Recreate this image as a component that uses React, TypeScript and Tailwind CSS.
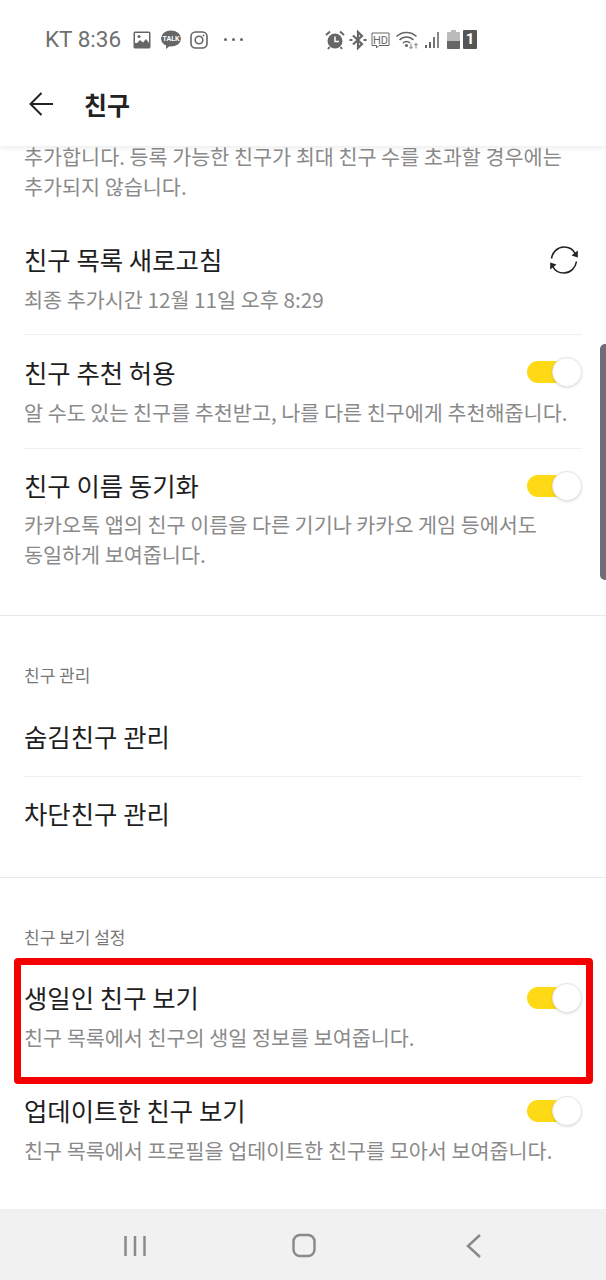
const font = { fontFamily: '"Noto Sans CJK KR", "Noto Sans", sans-serif' }

function Toggle() {
  return (
    <div className="relative h-[32px] w-[55px] shrink-0">
      <div className="absolute left-0 top-[5px] h-[22px] w-[40px] rounded-full bg-[#fdd916]" />
      <div className="absolute right-0 top-[1px] h-[30px] w-[30px] rounded-full border border-[#e6e6e6] bg-white shadow-sm" />
    </div>
  )
}

function Refresh() {
  return (
    <svg width="32" height="32" viewBox="0 0 32 32" fill="none" className="shrink-0">
      <path d="M3.5 14.5C4.5 8 9.5 3 16 3c5.2 0 9.5 2.8 11.5 7" stroke="#222" strokeWidth="1.6" />
      <path d="M28.5 17.5C27.5 24 22.500 29 16 29c-5.200 0-9.500-2.800-11.500-7" stroke="#222" strokeWidth="1.6" />
      <path d="M29.800 6.500 29.800 13.500 23.500 11.500Z" fill="#222" />
      <path d="M2.200 25.500 2.200 18.500 8.500 20.500Z" fill="#222" />
    </svg>
  )
}

function StatusBar() {
  return (
    <div className="flex h-[78px] items-center pl-[45px] pt-[1px] text-[#6f6f6f]">
      <span className="w-[90px] text-[22.5px] leading-none" style={{ fontFamily: 'Roboto, sans-serif' }}>KT 8:36</span>
      <svg width="18" height="18" viewBox="0 0 18 18" className="ml-[-2px]">
        <rect x="0.500" y="0.500" width="17" height="17" rx="1.500" fill="#666" />
        <rect x="2" y="2" width="14" height="10" fill="#fff" />
        <circle cx="6" cy="5.500" r="1.500" fill="#666" />
        <path d="M2 14 7 9l3 2.500L13 8l3 4v2Z" fill="#666" />
      </svg>
      <svg width="22" height="20" viewBox="0 0 22 20" className="ml-[9px]">
        <ellipse cx="11" cy="8.500" rx="10" ry="8" fill="#666" />
        <path d="M6 14v5l5-4Z" fill="#666" />
        <text x="11" y="11" textAnchor="middle" fontSize="7" fontWeight="700" fill="#fff" fontFamily="Roboto, sans-serif">TALK</text>
      </svg>
      <svg width="18" height="18" viewBox="0 0 18 18" fill="none" stroke="#666" strokeWidth="1.600" className="ml-[8px]">
        <rect x="1" y="1" width="16" height="16" rx="4.500" />
        <circle cx="9" cy="9" r="3.800" />
        <circle cx="13.500" cy="4.500" r="0.600" fill="#666" strokeWidth="0.800" />
      </svg>
      <div className="ml-[16px] flex gap-[5px]">
        <span className="h-[3px] w-[3px] rounded-full bg-[#666]" />
        <span className="h-[3px] w-[3px] rounded-full bg-[#666]" />
        <span className="h-[3px] w-[3px] rounded-full bg-[#666]" />
      </div>
      <svg width="20" height="20" viewBox="0 0 20 20" className="ml-[82px]">
        <circle cx="10" cy="11" r="7.500" fill="#666" />
        <path d="M10 6.500V11.500H14" stroke="#fff" strokeWidth="1.500" fill="none" />
        <path d="M1 5 5 1.500M19 5 15 1.500M4.500 17 3 19M15.500 17 17 19" stroke="#666" strokeWidth="2" />
      </svg>
      <svg width="18" height="20" viewBox="0 0 18 20" fill="none" stroke="#666" strokeWidth="2.200" className="ml-[4px]">
        <path d="M4 5.500 13 14 9 18V2l4 4-9 8.500" />
        <path d="M0.500 10H3.500M14.500 10h3" />
      </svg>
      <svg width="19" height="17" viewBox="0 0 19 17" fill="none" className="ml-[4px] mt-[1px]">
        <path d="M1 1h17v12.500H8L5.500 16v-2.500H1Z" stroke="#666" strokeWidth="1" />
        <text x="9.500" y="11.500" textAnchor="middle" fontSize="11" fill="#666" fontFamily="Roboto, sans-serif">HD</text>
      </svg>
      <svg width="24" height="20" viewBox="0 0 24 20" fill="none" stroke="#666" strokeWidth="1.500" className="ml-[6px]">
        <path d="M0.500 6.500C6 1 15 1 20.500 6.500" />
        <path d="M3.500 10c4-4 10-4 14 0" />
        <path d="M7 13c2-2 5-2 7 0" />
        <circle cx="10.500" cy="15.500" r="0.800" fill="#666" />
        <path d="M15 13.500v5M13.500 17l1.500 1.500 1.500-1.500M20 18.500v-5M18.500 15l1.500-1.500 1.500 1.500" stroke="#999" strokeWidth="1.200" />
      </svg>
      <svg width="16" height="18" viewBox="0 0 16 18" fill="#666" className="ml-[5px]">
        <rect x="0" y="14" width="2" height="3" />
        <rect x="4" y="11" width="2" height="6" />
        <rect x="8" y="6" width="2" height="11" fill="#777" />
        <rect x="12" y="1" width="2" height="16" fill="#888" />
      </svg>
      <svg width="13" height="19" viewBox="0 0 13 19" className="ml-[6px]">
        <path d="M4 0h5v2h3a1 1 0 0 1 1 1v15a1 1 0 0 1-1 1H1a1 1 0 0 1-1-1V3a1 1 0 0 1 1-1h3Z" fill="#bbb" />
        <path d="M0 11h13v7a1 1 0 0 1-1 1H1a1 1 0 0 1-1-1Z" fill="#666" />
      </svg>
      <div className="ml-[3px] flex h-[19px] w-[14px] items-center justify-center rounded-[1px] bg-[#555] text-[15px] font-bold leading-none text-white" style={{ fontFamily: 'Roboto, sans-serif' }}>1</div>
    </div>
  )
}

function Title({ children }: { children: string }) {
  return <div className="whitespace-nowrap text-[25.4px] leading-[36px] text-[#1e1e1e]">{children}</div>
}

function Desc({ children }: { children: string }) {
  return <div className="whitespace-nowrap text-[20.7px] leading-[30px] text-[#8a8a8a]">{children}</div>
}

function Label({ children }: { children: string }) {
  return <div className="text-[17px] leading-[24px] text-[#777]">{children}</div>
}

export default function App() {
  return (
    <div className="flex h-[1280px] w-[606px] flex-col overflow-hidden bg-white" style={font}>
      <div className="relative z-10 h-[146px] shrink-0 bg-white shadow-[0_2px_6px_rgba(0,0,0,0.08)]">
        <StatusBar />
        <div className="flex h-[52px] items-center pl-[29px]">
          <svg width="24" height="24" viewBox="0 0 24 24" fill="none" stroke="#222" strokeWidth="2">
            <path d="M24 12H2M12.500 1 1.500 12l11 11" />
          </svg>
          <span className="ml-[31px] text-[25px] font-semibold leading-none text-[#222]">친구</span>
        </div>
      </div>

      <div className="relative flex-1 overflow-hidden">
        {/* scrolled list */}
        <div className="mt-[-5px] px-[24px]">
          <Desc>추가합니다. 등록 가능한 친구가 최대 친구 수를 초과할 경우에는</Desc>
          <Desc>추가되지 않습니다.</Desc>

          <div className="mt-[40px] flex items-start justify-between border-b border-[#f0f0f0] pb-[20px]">
            <div className="min-w-0 flex-1">
              <Title>친구 목록 새로고침</Title>
              <div className="mt-[7px]"><Desc>최종 추가시간 12월 11일 오후 8:29</Desc></div>
            </div>
            <div className="mr-[2px] mt-[3px]"><Refresh /></div>
          </div>

          <div className="flex items-start justify-between border-b border-[#f0f0f0] pb-[21px] pt-[19px]">
            <div className="min-w-0 flex-1">
              <Title>친구 추천 허용</Title>
              <div className="mt-[7px]"><Desc>알 수도 있는 친구를 추천받고, 나를 다른 친구에게 추천해줍니다.</Desc></div>
            </div>
            <div className="mt-[2px]"><Toggle /></div>
          </div>

          <div className="flex items-start justify-between pt-[18px]">
            <div className="min-w-0 flex-1">
              <Title>친구 이름 동기화</Title>
              <div className="mt-[6px]">
                <Desc>카카오톡 앱의 친구 이름을 다른 기기나 카카오 게임 등에서도</Desc>
                <Desc>동일하게 보여줍니다.</Desc>
              </div>
            </div>
            <div className="mt-[3px]"><Toggle /></div>
          </div>
        </div>

        <div className="mt-[46px] border-t border-[#e8e8e8] px-[24px] pt-[47px]">
          <Label>친구 관리</Label>
          <div className="mt-[31px] border-b border-[#f0f0f0] pb-[22px]"><Title>숨김친구 관리</Title></div>
          <div className="pt-[18px]"><Title>차단친구 관리</Title></div>
        </div>

        <div className="mt-[46px] border-t border-[#e8e8e8] px-[24px] pt-[47px]">
          <Label>친구 보기 설정</Label>
          <div className="flex items-start justify-between pt-[30px]">
            <div className="min-w-0 flex-1">
              <Title>생일인 친구 보기</Title>
              <div className="mt-[7px]"><Desc>친구 목록에서 친구의 생일 정보를 보여줍니다.</Desc></div>
            </div>
            <div className="mt-[3px]"><Toggle /></div>
          </div>
          <div className="flex items-start justify-between pt-[40px]">
            <div className="min-w-0 flex-1">
              <Title>업데이트한 친구 보기</Title>
              <div className="mt-[7px]"><Desc>친구 목록에서 프로필을 업데이트한 친구를 모아서 보여줍니다.</Desc></div>
            </div>
            <div className="mt-[3px]"><Toggle /></div>
          </div>
        </div>

        {/* scroll indicator */}
        <div className="absolute right-0 top-[198px] h-[236px] w-[6px] rounded-l-[5px] bg-[#6f6d78]" />
        {/* red highlight drawn over the screenshot */}
        <div className="absolute left-[14px] top-[812px] h-[126px] w-[579px] rounded-[4px] border-[7px] border-[#f40000]" />
      </div>

      <div className="flex h-[71px] shrink-0 items-center bg-[#f1f1f1]">
        <svg width="606" height="71" viewBox="0 0 606 71" fill="none" stroke="#8a8a8a" strokeWidth="2.500">
          <path d="M125.500 27v20M135 27v20M144.500 27v20" />
          <rect x="293.500" y="26" width="21" height="21" rx="6.500" />
          <path d="M480 26 468 37l12 11" />
        </svg>
      </div>
    </div>
  )
}
